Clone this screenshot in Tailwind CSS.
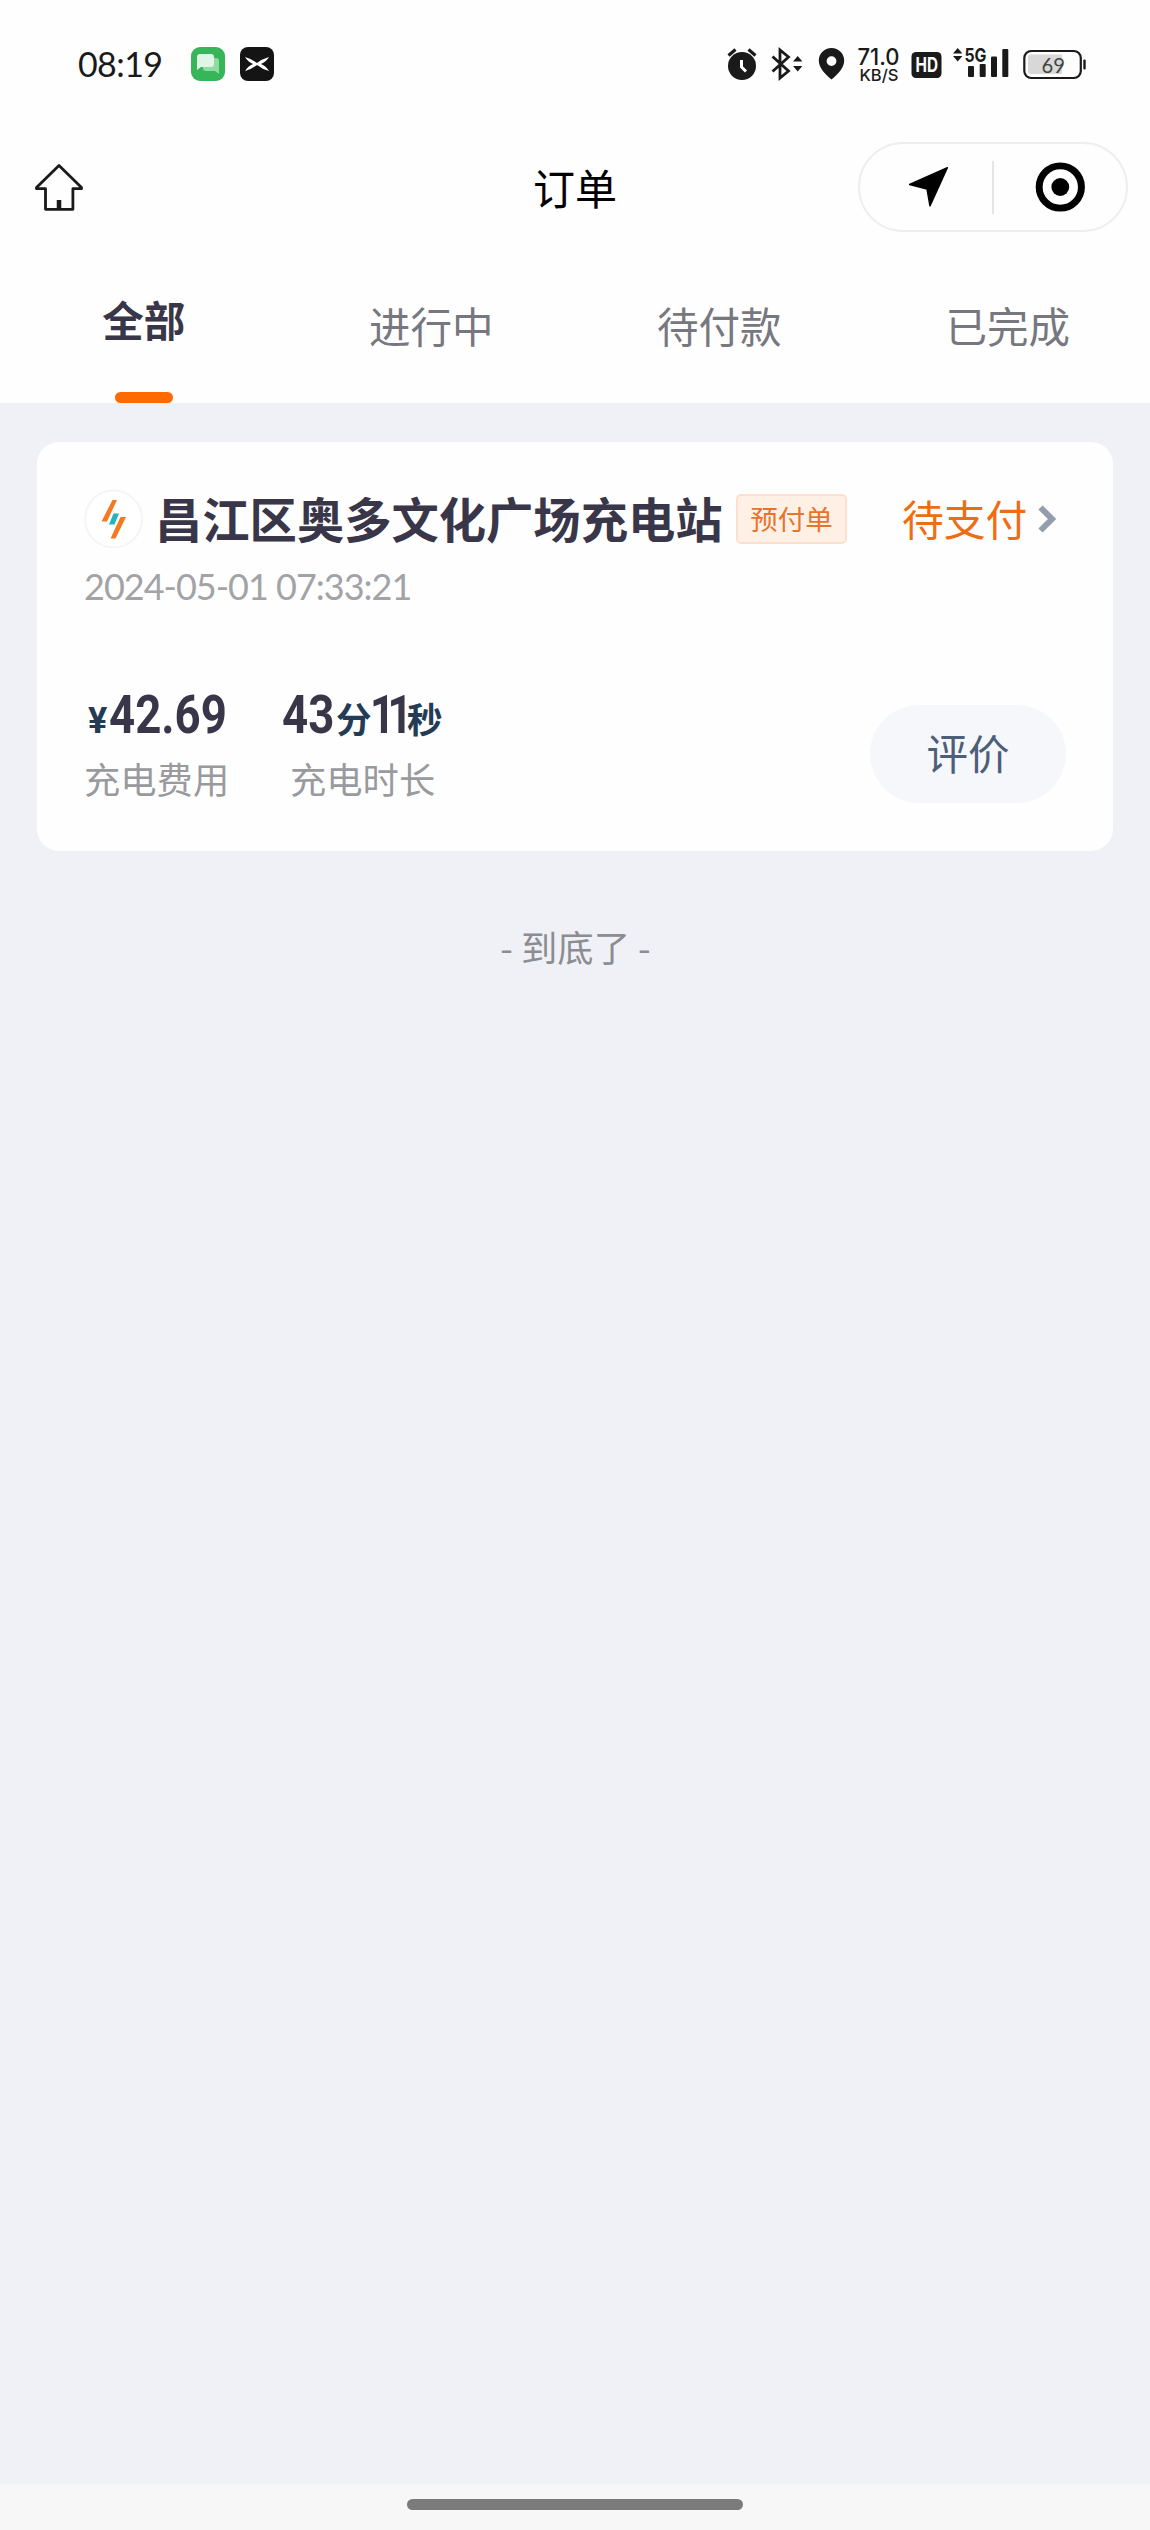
<!DOCTYPE html>
<html lang="zh-CN">
<head>
<meta charset="utf-8">
<title>订单</title>
<script src="https://cdn.jsdelivr.net/npm/@tailwindcss/browser@4"></script>
</head>
<body class="bg-[#f0f1f6] font-['Noto_Sans_CJK_SC',sans-serif]">
<div class="flex h-[2530px] w-[1150px] flex-col overflow-hidden">
  <header class="h-[403px] shrink-0 bg-[#fefefe]">
    <!-- status bar -->
    <div class="flex h-[128px] items-center pl-[78px] text-[#1a1a1a]">
      <span class="w-[113px] whitespace-nowrap font-['Lato',sans-serif] text-[34px] leading-none tracking-[-0.6px]">08:19</span>
      <svg class="mr-[15px] h-[34px] w-[34px]" viewBox="0 0 34 34">
        <rect width="34" height="34" rx="9" fill="#36b559"/>
        <path d="M15 11h10q3 0 3 3v13l-4-3h-9q-3 0-3-3v-7q0-3 3-3z" fill="#8fdba3"/>
        <path d="M9 7h11q3 0 3 3v7q0 3-3 3H10l-4 3V10q0-3 3-3z" fill="#e0f5e5"/>
      </svg>
      <svg class="h-[34px] w-[34px]" viewBox="0 0 34 34">
        <rect width="34" height="34" rx="8" fill="#141414"/>
        <path d="M5 10q7 2 12 6q5-4 12-6q-3 5-8 7q5 2 8 7q-7-2-12-6q-5 4-12 6q3-5 8-7q-5-2-8-7z" fill="#fff"/>
      </svg>
      <svg class="ml-[436px] h-[60px] w-[390px]" viewBox="710 34 390 60">
        <g fill="#1a1a1a">
          <circle cx="742" cy="66" r="14"/>
          <path d="M728.5 55.5l7-6M755.5 55.5l-7-6" stroke="#1a1a1a" stroke-width="3.2"/>
          <path d="M741.5 60v7l4.5 4.5" fill="none" stroke="#fff" stroke-width="3"/>
          <path d="M772.5 56.5l16 14.5-8.500 7V50l8.500 7-16 14.500" fill="none" stroke="#1a1a1a" stroke-width="2.800"/>
          <path d="M793 61.500l4.700-5.500 4.700 5.500zM793 66l4.700 5.500 4.700-5.500z"/>
          <path fill-rule="evenodd" d="M831.500 48c7.200 0 12.700 5.600 12.700 12.600 0 7.400-6.200 13.400-12.700 19-6.500-5.600-12.700-11.600-12.700-19 0-7 5.500-12.600 12.700-12.600zm0 8.200a4.900 4.900 0 1 0 0 9.800a4.900 4.900 0 1 0 0-9.800z"/>
          <g font-family="Inter, sans-serif">
            <text x="857.500" y="65" font-size="22.500" font-weight="500" textLength="42" lengthAdjust="spacingAndGlyphs">71.0</text>
            <text x="859.500" y="81" font-size="16.500" font-weight="500" textLength="39" lengthAdjust="spacingAndGlyphs">KB/S</text>
            <rect x="911.500" y="52" width="30" height="26" rx="4.500"/>
            <text x="915.500" y="72" font-size="19.500" font-weight="700" fill="#fff" textLength="22.500" lengthAdjust="spacingAndGlyphs">HD</text>
            <text x="964.500" y="62" font-size="19" font-weight="700" textLength="22" lengthAdjust="spacingAndGlyphs">5G</text>
          </g>
          <path d="M953 53.500l4.700-5.500 4.700 5.500zM953 56l4.700 5.500 4.700-5.500z"/>
          <rect x="968" y="66" width="6" height="11" rx="1"/><rect x="979.700" y="64" width="6" height="13" rx="1"/><rect x="991" y="56.500" width="6" height="20.500" rx="1"/><rect x="1002.300" y="49" width="6" height="28" rx="1"/>
          <path d="M1031 54.500h31V74h-31q-3 0-3-3V57.500q0-3 3-3z" fill="#d8d8d8"/>
          <rect x="1024.300" y="51" width="56.500" height="27" rx="7" fill="none" stroke="#1a1a1a" stroke-width="2.200"/>
          <rect x="1083.300" y="59.500" width="2.400" height="10" rx="1"/>
          <text x="1041.500" y="72.500" font-family="Lato, sans-serif" font-size="22" fill="#444" textLength="23.500" lengthAdjust="spacingAndGlyphs">69</text>
        </g>
      </svg>
    </div>
    <!-- navigation bar -->
    <div class="grid h-[118px] grid-cols-3 items-center pl-[35px] pr-[22px]">
      <svg class="h-[48px] w-[48px]" viewBox="0 0 48 48" fill="none" stroke="#1a1a1a" stroke-width="2.800" stroke-linejoin="round">
        <path d="M24 2.500L1.500 24.500v1.200h9v20.600h27.400V25.700h8.600v-1.200z"/>
        <path d="M24 46V37" stroke-width="4.500"/>
      </svg>
      <h1 class="pr-[13px] text-center text-[42px] leading-[60px] text-black">订单</h1>
      <div class="flex h-[90px] w-[270px] items-center justify-self-end rounded-full border-2 border-[#eeeeee]">
        <svg class="h-[52px] w-[133px]" viewBox="860 161 133 52"><path d="M948 167.500L910 184.500l17.500 4.500 3 17z" stroke="#000" stroke-width="1.500" stroke-linejoin="round"/></svg>
        <div class="h-[53px] w-[2px] bg-[#e5e5e5]"></div>
        <svg class="h-[52px] w-[133px]" viewBox="995 161 133 52"><circle cx="1061.800" cy="187" r="21.300" fill="none" stroke="#000" stroke-width="7"/><circle cx="1061.800" cy="187" r="9"/></svg>
      </div>
    </div>
    <!-- order filters -->
    <nav class="grid h-[157px] grid-cols-4 text-center text-[41.500px] leading-[60px] text-[#77777f]">
      <div class="flex flex-col items-center justify-between pt-[43px] font-bold text-[#383648]">
        <span>全部</span><span class="h-[11px] w-[58px] rounded-full bg-[#ff6a00]"></span>
      </div>
      <div class="pt-[49px]">进行中</div>
      <div class="pl-[1px] pt-[49px]">待付款</div>
      <div class="pl-[3px] pt-[49px]">已完成</div>
    </nav>
  </header>

  <main class="flex flex-1 flex-col px-[37px] pt-[39px]">
    <article class="flex h-[409px] flex-col rounded-[22px] bg-[#fefefe] pl-[47px] pr-[47px] pt-[43px]">
      <div class="flex h-[68px] items-center whitespace-nowrap">
        <svg class="mr-[11px] h-[60px] w-[60px] shrink-0" viewBox="0 0 60 60">
          <circle cx="29.500" cy="30" r="28.500" fill="#fff" stroke="#f5f5f5" stroke-width="2"/>
          <path d="M28.500 11h4.500L23 32.500h-5.500zM36.500 28h5.500L31.500 49.500h-5z" fill="#f5791f"/>
          <path d="M29.500 24.500h5.500l-4.500 11H25z" fill="#23b5bf"/>
        </svg>
        <h2 class="-mt-[3px] w-[581px] shrink-0 text-[47.300px] font-bold leading-[60px] text-[#383648]">昌江区奥多文化广场充电站</h2>
        <span class="flex h-[50px] w-[111px] shrink-0 items-center justify-center rounded-[5px] border-2 border-[#fddfd0] bg-[#fff0e6] text-[27.500px] leading-none text-[#e8742c]">预付单</span>
        <span class="-mt-[3px] ml-[55px] text-[41.800px] leading-[60px] text-[#f06c10]">待支付</span>
        <svg class="ml-[11px] h-[30px] w-[20px] shrink-0" viewBox="0 0 20 30"><path d="M2.500 3.500L14 15 2.500 26.500" fill="none" stroke="#929eac" stroke-width="6"/></svg>
      </div>
      <time class="-mt-[2px] flex h-[70px] items-center whitespace-nowrap font-['Lato',sans-serif] text-[36px] font-normal tracking-[-1px] text-[#a2a3a7]">2024-05-01 07:33:21</time>
      <div class="mt-[57px] flex">
        <div class="w-[206px]">
          <div class="flex h-[75px] items-baseline font-['Roboto',sans-serif] font-bold leading-[74px] text-[#383648]">
            <span class="ml-[4px] w-[21px] text-[36px] text-[#243b55]">¥</span>
            <span class="origin-left scale-x-[0.86] text-[53px]">42.69</span>
          </div>
          <div class="text-[36.300px] leading-[50px] text-[#999a9e]">充电费用</div>
        </div>
        <div class="flex-1">
          <div class="-ml-[8px] flex h-[75px] items-baseline font-bold leading-[74px] text-[#383648]">
            <span class="w-[54px] font-['Roboto',sans-serif] text-[53px]"><span class="inline-block origin-left scale-x-[0.86]">43</span></span>
            <span class="w-[34px] text-[35.500px] text-[#243b55]">分</span>
            <span class="w-[37px] font-['Roboto',sans-serif] text-[53px] tracking-[-9px]"><span class="inline-block origin-left scale-x-[0.82]">11</span></span>
            <span class="text-[35.500px] text-[#243b55]">秒</span>
          </div>
          <div class="text-[36.300px] leading-[50px] text-[#999a9e]">充电时长</div>
        </div>
        <button class="mt-[27px] flex h-[98px] w-[196px] items-center justify-center rounded-full bg-[#f5f7fb] pb-[3px] text-[41.500px] text-[#4d5e78]">评价</button>
      </div>
    </article>
    <p class="mt-[65px] pl-[1px] text-center text-[36.300px] leading-[60px] text-[#8b8d92]">- 到底了 -</p>
  </main>

  <footer class="flex h-[46px] shrink-0 justify-center bg-[#f7f7f7] pt-[15px]">
    <div class="h-[11px] w-[336px] rounded-full bg-[#7b7b7b]"></div>
  </footer>
</div>
</body>
</html>
